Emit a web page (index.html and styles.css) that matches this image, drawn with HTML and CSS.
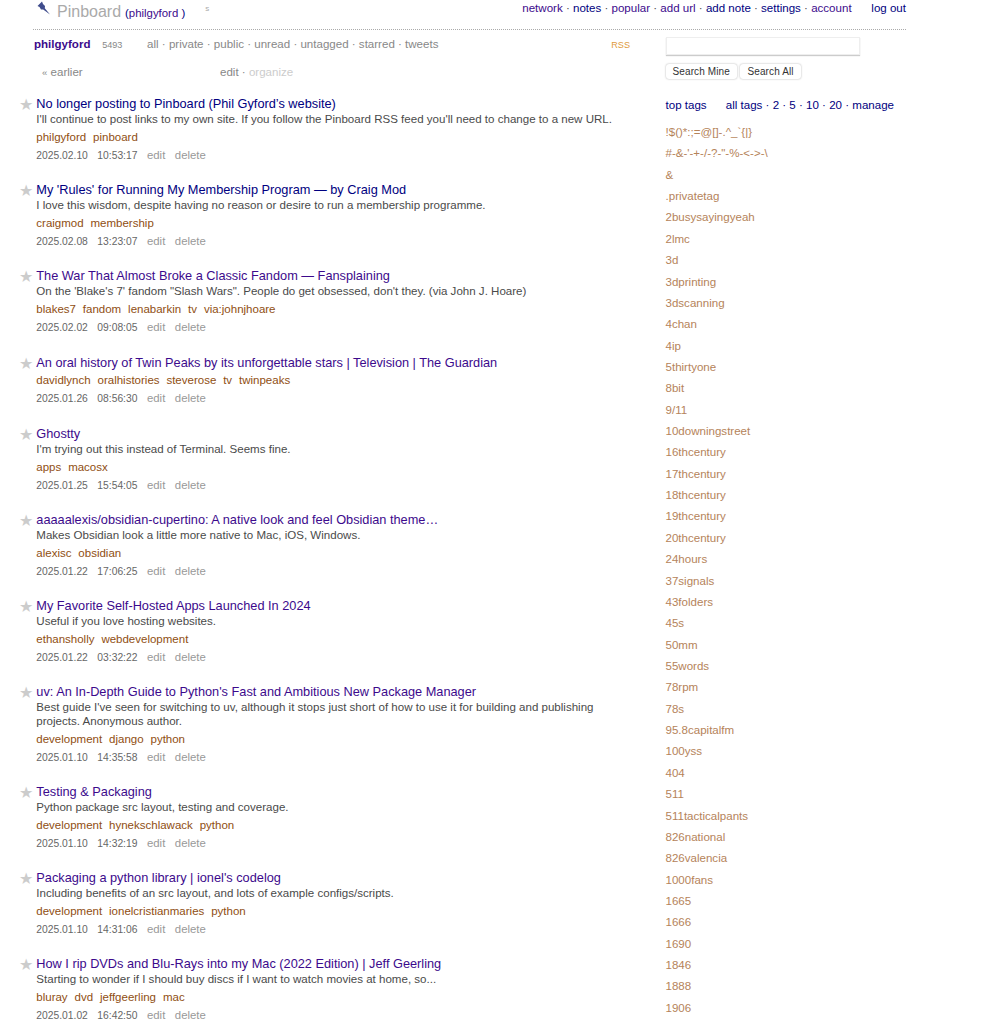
FILE: index.html
```html
<!DOCTYPE html>
<html lang="en">
<head>
  <meta charset="UTF-8">
  <title>Pinboard (philgyford)</title>
  <link rel="stylesheet" href="styles.css">
</head>
<body>
  <div class="page">
    <div class="banner">
      <div class="banner-left">
        <svg class="pin" width="16" height="16" viewBox="0 0 16 16"><path d="M1.5 6 L6 1.5 L7 4 L9 6 L8.8 8.2 L14 14.5 L7.2 9.6 L5 9.5 L3.5 7 Z" fill="#3f4c8c"/></svg>
        <span class="logo">Pinboard</span>
        <span class="whoami">(<a class="visited" href="#">philgyford</a> )</span>
        <span class="small-s">s</span>
      </div>
      <div class="banner-right">
        <a class="visited" href="#">network</a> · <a href="#">notes</a> · <a class="visited" href="#">popular</a> · <a class="visited" href="#">add url</a> · <a href="#">add note</a> · <a href="#">settings</a> · <a class="visited" href="#">account</a>
        <a class="logout" href="#">log out</a>
      </div>
    </div>

    <div class="columns">
      <div class="main">
        <div class="subnav">
          <a class="username" href="#">philgyford</a>
          <span class="count">5493</span>
          <span class="filters">all · private · public · unread · untagged · starred · tweets</span>
          <a class="rss" href="#">RSS</a>
        </div>
        <div class="pager">
          <span class="earlier"><small>«</small> earlier</span>
          <span class="edit-links">edit · <span class="faint">organize</span></span>
        </div>

        <div class="bookmark">
          <span class="star">★</span>
          <a class="title" href="#">No longer posting to Pinboard (Phil Gyford’s website)</a>
          <div class="desc">I'll continue to post links to my own site. If you follow the Pinboard RSS feed you'll need to change to a new URL.</div>
          <div class="tags"><a href="#">philgyford</a><a href="#">pinboard</a></div>
          <div class="when"><span>2025.02.10</span><span>10:53:17</span><span class="act">edit</span><span class="act">delete</span></div>
        </div>
        <div class="bookmark">
          <span class="star">★</span>
          <a class="title" href="#">My 'Rules' for Running My Membership Program — by Craig Mod</a>
          <div class="desc">I love this wisdom, despite having no reason or desire to run a membership programme.</div>
          <div class="tags"><a href="#">craigmod</a><a href="#">membership</a></div>
          <div class="when"><span>2025.02.08</span><span>13:23:07</span><span class="act">edit</span><span class="act">delete</span></div>
        </div>
        <div class="bookmark">
          <span class="star">★</span>
          <a class="title visited" href="#">The War That Almost Broke a Classic Fandom — Fansplaining</a>
          <div class="desc">On the 'Blake's 7' fandom "Slash Wars". People do get obsessed, don't they. (via John J. Hoare)</div>
          <div class="tags"><a href="#">blakes7</a><a href="#">fandom</a><a href="#">lenabarkin</a><a href="#">tv</a><a href="#">via:johnjhoare</a></div>
          <div class="when"><span>2025.02.02</span><span>09:08:05</span><span class="act">edit</span><span class="act">delete</span></div>
        </div>
        <div class="bookmark no-desc">
          <span class="star">★</span>
          <a class="title visited" href="#">An oral history of Twin Peaks by its unforgettable stars | Television | The Guardian</a>
          <div class="tags"><a href="#">davidlynch</a><a href="#">oralhistories</a><a href="#">steverose</a><a href="#">tv</a><a href="#">twinpeaks</a></div>
          <div class="when"><span>2025.01.26</span><span>08:56:30</span><span class="act">edit</span><span class="act">delete</span></div>
        </div>
        <div class="bookmark">
          <span class="star">★</span>
          <a class="title visited" href="#">Ghostty</a>
          <div class="desc">I'm trying out this instead of Terminal. Seems fine.</div>
          <div class="tags"><a href="#">apps</a><a href="#">macosx</a></div>
          <div class="when"><span>2025.01.25</span><span>15:54:05</span><span class="act">edit</span><span class="act">delete</span></div>
        </div>
        <div class="bookmark">
          <span class="star">★</span>
          <a class="title visited" href="#">aaaaalexis/obsidian-cupertino: A native look and feel Obsidian theme…</a>
          <div class="desc">Makes Obsidian look a little more native to Mac, iOS, Windows.</div>
          <div class="tags"><a href="#">alexisc</a><a href="#">obsidian</a></div>
          <div class="when"><span>2025.01.22</span><span>17:06:25</span><span class="act">edit</span><span class="act">delete</span></div>
        </div>
        <div class="bookmark">
          <span class="star">★</span>
          <a class="title visited" href="#">My Favorite Self-Hosted Apps Launched In 2024</a>
          <div class="desc">Useful if you love hosting websites.</div>
          <div class="tags"><a href="#">ethansholly</a><a href="#">webdevelopment</a></div>
          <div class="when"><span>2025.01.22</span><span>03:32:22</span><span class="act">edit</span><span class="act">delete</span></div>
        </div>
        <div class="bookmark">
          <span class="star">★</span>
          <a class="title visited" href="#">uv: An In-Depth Guide to Python's Fast and Ambitious New Package Manager</a>
          <div class="desc">Best guide I've seen for switching to uv, although it stops just short of how to use it for building and publishing projects. Anonymous author.</div>
          <div class="tags"><a href="#">development</a><a href="#">django</a><a href="#">python</a></div>
          <div class="when"><span>2025.01.10</span><span>14:35:58</span><span class="act">edit</span><span class="act">delete</span></div>
        </div>
        <div class="bookmark">
          <span class="star">★</span>
          <a class="title visited" href="#">Testing &amp; Packaging</a>
          <div class="desc">Python package src layout, testing and coverage.</div>
          <div class="tags"><a href="#">development</a><a href="#">hynekschlawack</a><a href="#">python</a></div>
          <div class="when"><span>2025.01.10</span><span>14:32:19</span><span class="act">edit</span><span class="act">delete</span></div>
        </div>
        <div class="bookmark">
          <span class="star">★</span>
          <a class="title visited" href="#">Packaging a python library | ionel's codelog</a>
          <div class="desc">Including benefits of an src layout, and lots of example configs/scripts.</div>
          <div class="tags"><a href="#">development</a><a href="#">ionelcristianmaries</a><a href="#">python</a></div>
          <div class="when"><span>2025.01.10</span><span>14:31:06</span><span class="act">edit</span><span class="act">delete</span></div>
        </div>
        <div class="bookmark">
          <span class="star">★</span>
          <a class="title visited" href="#">How I rip DVDs and Blu-Rays into my Mac (2022 Edition) | Jeff Geerling</a>
          <div class="desc">Starting to wonder if I should buy discs if I want to watch movies at home, so...</div>
          <div class="tags"><a href="#">bluray</a><a href="#">dvd</a><a href="#">jeffgeerling</a><a href="#">mac</a></div>
          <div class="when"><span>2025.01.02</span><span>16:42:50</span><span class="act">edit</span><span class="act">delete</span></div>
        </div>
      </div>

      <div class="side">
        <input class="search" type="text">
        <div class="search-btns">
          <button>Search Mine</button>
          <button>Search All</button>
        </div>
        <div class="tag-head">
          <a href="#">top tags</a>
          <span class="tag-opts"><a href="#">all tags</a> · <a href="#">2</a> · <a href="#">5</a> · <a href="#">10</a> · <a href="#">20</a> · <a href="#">manage</a></span>
        </div>
        <ul class="tag-list">
          <li>!$()*:;=@[]-.^_`{|}</li>
          <li>#-&amp;-'-+-/-?-"-%-&lt;-&gt;-\</li>
          <li>&amp;</li>
          <li>.privatetag</li>
          <li>2busysayingyeah</li>
          <li>2lmc</li>
          <li>3d</li>
          <li>3dprinting</li>
          <li>3dscanning</li>
          <li>4chan</li>
          <li>4ip</li>
          <li>5thirtyone</li>
          <li>8bit</li>
          <li>9/11</li>
          <li>10downingstreet</li>
          <li>16thcentury</li>
          <li>17thcentury</li>
          <li>18thcentury</li>
          <li>19thcentury</li>
          <li>20thcentury</li>
          <li>24hours</li>
          <li>37signals</li>
          <li>43folders</li>
          <li>45s</li>
          <li>50mm</li>
          <li>55words</li>
          <li>78rpm</li>
          <li>78s</li>
          <li>95.8capitalfm</li>
          <li>100yss</li>
          <li>404</li>
          <li>511</li>
          <li>511tacticalpants</li>
          <li>826national</li>
          <li>826valencia</li>
          <li>1000fans</li>
          <li>1665</li>
          <li>1666</li>
          <li>1690</li>
          <li>1846</li>
          <li>1888</li>
          <li>1906</li>
        </ul>
      </div>
    </div>
  </div>
</body>
</html>
```

FILE: styles.css
```css
html, body {
  height: 1024px;
  overflow: hidden;
}
body {
  margin: 0;
  background: #fff;
  color: #4a4a4a;
  font-family: "Liberation Sans", Arial, sans-serif;
  font-size: 11.55px;
}
a {
  color: #000080;
  text-decoration: none;
}
a.visited {
  color: #3c0a8c;
}
.page {
  padding-left: 33px;
  width: 873px;
}
.banner {
  display: flex;
  justify-content: space-between;
  height: 29px;
  border-bottom: 1px dotted #aaa;
}
.banner-left {
  display: flex;
  align-items: baseline;
  position: relative;
  padding-left: 24px;
  padding-top: 1px;
}
.pin {
  position: absolute;
  left: 3px;
  top: 0;
}
.logo {
  font-size: 16px;
  color: #aaa;
  line-height: 22px;
}
.whoami {
  margin-left: 4px;
  font-size: 11.4px;
  color: #000080;
}
.small-s {
  margin-left: 20px;
  font-size: 8px;
  color: #aaa;
  position: relative;
  top: -6px;
}
.banner-right {
  padding-top: 1px;
  line-height: 15px;
}
.logout {
  margin-left: 16.5px;
}
.columns {
  display: flex;
}
.main {
  width: 597px;
  flex: none;
}
.subnav {
  display: flex;
  align-items: baseline;
  height: 28px;
  padding-top: 7px;
  padding-left: 1px;
  box-sizing: border-box;
  color: #888;
  line-height: 15px;
}
.username {
  color: #3c0a8c;
  font-weight: bold;
}
.count {
  margin-left: 11.7px;
  font-size: 9.1px;
  color: #888;
}
.filters {
  margin-left: 24.7px;
}
.rss {
  margin-left: auto;
  color: #e09a3c;
  font-size: 9.1px;
}
.pager {
  display: flex;
  height: 38px;
  padding-top: 7px;
  box-sizing: border-box;
  color: #888;
  line-height: 15px;
}
.earlier {
  margin-left: 9px;
  width: 178px;
}
.faint {
  color: #ccc;
}
.bookmark {
  position: relative;
  padding-left: 3.3px;
  padding-bottom: 18px;
  width: 590px;
}
.no-desc {
  margin-top: 1px;
  padding-bottom: 19px;
}
.star {
  position: absolute;
  left: -14px;
  top: 0;
  color: #ccc;
  font-size: 16px;
  line-height: 18px;
}
.title {
  display: block;
  font-size: 12.75px;
  line-height: 16px;
}
.desc {
  line-height: 14px;
  margin-bottom: 2px;
}
.tags {
  line-height: 18px;
  font-size: 11.5px;
}
.tags a {
  color: #8f4e12;
  margin-right: 6.9px;
}
.when {
  font-size: 10.3px;
  height: 18px;
  line-height: 18px;
  color: #666;
}
.when span {
  margin-right: 9.5px;
}
.when .act {
  color: #999;
  font-size: 11.4px;
}
.side {
  margin-left: 35.5px;
  flex: 1;
}
.search {
  display: block;
  width: 194px;
  height: 18px;
  box-sizing: border-box;
  border: 1px solid #eee;
  box-shadow: 0 1px 1px #ccc;
  margin-top: 7px;
  padding: 0;
}
.search-btns {
  display: flex;
  gap: 3.5px;
  margin-top: 9px;
}
.search-btns button {
  height: 15px;
  padding: 0 7px;
  border: 0;
  border-radius: 3px;
  background: #fff;
  box-shadow: 0 0 2px #aaa;
  font-family: inherit;
  font-size: 10px;
  letter-spacing: 0.12px;
  color: #333;
}
.tag-head {
  margin-top: 18px;
  line-height: 16px;
  color: #000080;
}
.tag-opts {
  margin-left: 16px;
}
.tag-list {
  list-style: none;
  margin: 9px 0 0;
  padding: 0;
}
.tag-list li {
  color: #b5835a;
  height: 21.37px;
  line-height: 21.37px;
}
```
